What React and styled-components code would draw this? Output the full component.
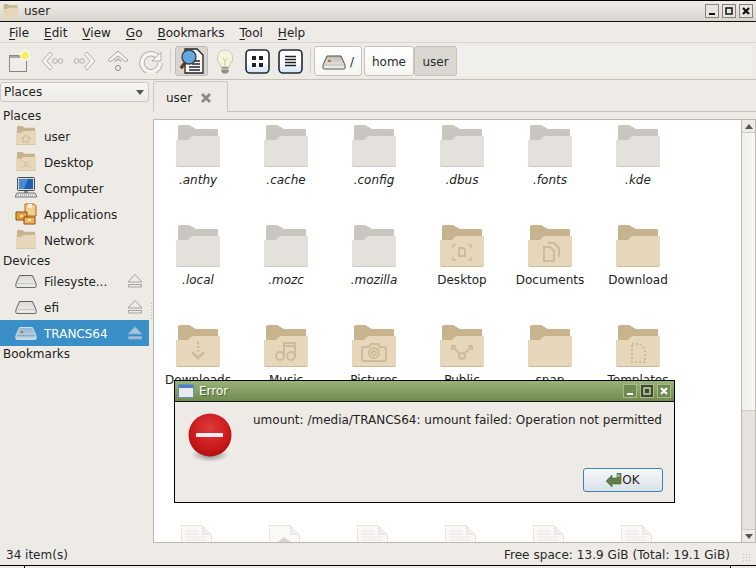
import React from 'react';
import styled, { createGlobalStyle } from 'styled-components';

const GlobalStyle = createGlobalStyle`
  html, body {
    margin: 0;
    padding: 0;
    background: #eeebe7;
  }
  * {
    box-sizing: border-box;
  }
`;

const Win = styled.div`
  position: relative;
  width: 756px;
  height: 568px;
  display: flex;
  flex-direction: column;
  overflow: hidden;
  background: #eeebe7;
  color: #1f2223;
  font-family: "DejaVu Sans", sans-serif;
  font-size: 12px;
  border-top: 1px solid #000;
`;

const TitleBar = styled.div`
  height: 21px;
  flex: none;
  display: flex;
  align-items: center;
  padding: 0 3px;
  background: linear-gradient(#f0ede9, #d8d3cd);
  border-bottom: 1px solid #111;
`;

const TitleText = styled.span`
  margin-left: 6px;
  flex: 1;
  color: #2a2a2a;
`;

const WinButtons = styled.div`
  display: flex;
  gap: 3px;
`;

const WinButton = styled.div`
  width: 14px;
  height: 14px;
  display: flex;
  align-items: center;
  justify-content: center;
  border: 1px solid ${({ $green }) => ($green ? '#a9bb8b' : '#8c8378')};
  background: ${({ $green, $dark }) => ($dark ? '#3f4a2c' : $green ? '#6f8a50' : '#e9e5e0')};
`;

const MenuBar = styled.div`
  height: 20px;
  flex: none;
  display: flex;
  align-items: center;
  padding: 2px 0 0 9px;
  gap: 15px;
`;

const MenuItem = styled.span`
  u {
    text-underline-offset: 2px;
  }
`;

const Toolbar = styled.div`
  height: 38px;
  flex: none;
  display: flex;
  align-items: center;
  padding: 0 4px 0 2px;
  border-top: 1px solid #d9d6d1;
  border-bottom: 1px solid #c4c1bb;
  background: #eeebe7;
`;

const ToolButton = styled.div`
  width: 33px;
  height: 30px;
  flex: none;
  display: flex;
  align-items: center;
  justify-content: center;
  border-radius: 3px;
  ${({ $active }) => $active && 'background: #d9d6d2; border: 1px solid #c0bdb8;'}
`;

const ToolSep = styled.div`
  width: 1px;
  height: 24px;
  flex: none;
  background: #d0cdc8;
  margin: ${({ $m }) => $m};
`;

const PathBar = styled.div`
  flex: 1;
  height: 30px;
  display: flex;
  background: #f1efeb;
`;

const PathButton = styled.div`
  width: ${({ $w }) => $w}px;
  margin-right: ${({ $mr }) => $mr || 0}px;
  display: flex;
  align-items: center;
  justify-content: center;
  gap: 4px;
  padding-top: 2px;
  border: 1px solid #c6c3bd;
  border-radius: 3px;
  background: ${({ $pressed }) => ($pressed ? '#dad7d3' : 'linear-gradient(#fff, #f6f5f3)')};
  color: #2a2d2e;
`;

const Main = styled.div`
  flex: 1;
  min-height: 0;
  display: flex;
`;

const Sidebar = styled.div`
  width: 149px;
  flex: none;
  display: flex;
  flex-direction: column;
  padding-top: 2px;
`;

const Combo = styled.div`
  height: 20px;
  flex: none;
  margin-bottom: 5px;
  display: flex;
  align-items: center;
  justify-content: space-between;
  padding: 0 4px 0 3px;
  border: 1px solid #cbc8c2;
  border-radius: 3px;
  background: linear-gradient(#f6f5f2, #ecebe7);
`;

const Caret = styled.span`
  width: 0;
  height: 0;
  border-left: 4px solid transparent;
  border-right: 4px solid transparent;
  border-${({ $up }) => ($up ? 'bottom' : 'top')}: 5px solid #555;
`;

const SideHeader = styled.div`
  height: ${({ $h }) => $h || 16}px;
  padding-left: 3px;
  line-height: ${({ $h }) => ($h || 16) + ($h === 17 ? 0 : 2)}px;
`;

const SideRow = styled.div`
  height: 26px;
  flex: none;
  display: flex;
  align-items: center;
  padding: 0 6px 0 15px;
  background: ${({ $sel }) => ($sel ? '#3a8fc7' : 'transparent')};
  color: ${({ $sel }) => ($sel ? '#fff' : 'inherit')};
`;

const SideIcon = styled.div`
  width: 22px;
  height: 22px;
  flex: none;
  display: flex;
  align-items: center;
  justify-content: center;
  margin-right: 7px;
`;

const SideLabel = styled.span`
  flex: 1;
  margin-top: 2px;
  white-space: nowrap;
`;

const Handle = styled.div`
  width: 4px;
  flex: none;
  display: flex;
  align-items: center;
  justify-content: center;
`;

const HandleDots = styled.div`
  width: 1px;
  height: 18px;
  background: repeating-linear-gradient(#bdb9b3 0 1px, transparent 1px 3px);
`;

const Notebook = styled.div`
  flex: 1;
  min-width: 0;
  display: flex;
  flex-direction: column;
`;

const TabStrip = styled.div`
  height: 31px;
  flex: none;
  display: flex;
  margin-top: 1px;
  border-bottom: 1px solid #c4c1bb;
  margin-bottom: 7px;
`;

const Tab = styled.div`
  width: 75px;
  height: 31px;
  display: flex;
  align-items: center;
  padding: 2px 0 0 12px;
  gap: 8px;
  border: 1px solid #cbc8c2;
  border-bottom: 1px solid #eeebe7;
  border-radius: 3px 3px 0 0;
`;

const ViewFrame = styled.div`
  flex: 1;
  min-height: 0;
  display: flex;
  border: 1px solid #bcb9b3;
  border-right: none;
`;

const FileArea = styled.div`
  flex: 1;
  overflow: hidden;
  background: #fff;
`;

const FileGrid = styled.div`
  display: grid;
  grid-template-columns: repeat(6, 88px);
  grid-auto-rows: 100px;
  padding-top: 5px;
`;

const FileCell = styled.div`
  display: flex;
  flex-direction: column;
  align-items: center;
`;

const RowGap = styled.div`
  grid-column: 1 / -1;
`;

const FileIcon = styled.div`
  height: 42px;
  display: flex;
  align-items: flex-start;
  padding-right: ${({ $doc }) => ($doc ? 3 : 0)}px;
`;

const FileName = styled.span`
  margin-top: 6px;
  line-height: 15px;
  font-style: ${({ $hidden }) => ($hidden ? 'italic' : 'normal')};
  color: #222;
`;

const ScrollBar = styled.div`
  width: 15px;
  flex: none;
  display: flex;
  flex-direction: column;
  border-left: 1px solid #bcb9b3;
  border-right: 1px solid #bcb9b3;
  background: linear-gradient(90deg, #f1efec, #f8f7f5);
`;

const ScrollEnd = styled.div`
  height: 13px;
  flex: none;
  display: flex;
  align-items: center;
  justify-content: center;
  background: #eeebe7;
  border-${({ $top }) => ($top ? 'bottom' : 'top')}: 1px solid #cdcac5;
`;

const ScrollTrack = styled.div`
  flex: 1;
`;

const ScrollThumb = styled.div`
  height: 119px;
  flex: none;
  background: #e6e3df;
  border-top: 1px solid #d2cfca;
`;

const StatusBar = styled.div`
  height: 22px;
  flex: none;
  display: flex;
  align-items: center;
  justify-content: space-between;
  padding: 2px 4px 0 6px;
  color: #26292a;
`;

const StatusRight = styled.div`
  display: flex;
  align-items: center;
  gap: 12px;
  letter-spacing: 0.05px;
`;

const Grip = styled.div`
  width: 10px;
  height: 10px;
  margin-top: 6px;
  background: radial-gradient(circle, #c4c1bb 0.6px, transparent 0.8px) 0 0 / 3px 3px;
`;

const BottomStrip = styled.div`
  height: 3px;
  flex: none;
  display: flex;
  background: #eeebe7;
  border-top: 1px solid #000;
`;

const StripCell = styled.div`
  width: ${({ $w }) => $w}px;
  border-right: 1px solid #000;
`;

const Dialog = styled.div`
  position: absolute;
  left: 174px;
  top: 379px;
  width: 501px;
  height: 123px;
  display: flex;
  flex-direction: column;
  border: 1px solid #000;
  background: #eeebe7;
`;

const DialogTitle = styled.div`
  height: 21px;
  flex: none;
  display: flex;
  align-items: center;
  padding: 0 3px;
  background: linear-gradient(#9ab277, #6e8b4e);
  border-bottom: 1px solid #111;
  color: #fff;
  text-shadow: 1px 1px 1px #4b5d36;
`;

const DialogTitleText = styled.span`
  flex: 1;
  margin-left: 5px;
`;

const DialogBody = styled.div`
  flex: 1;
  min-width: 0;
  display: flex;
  padding: 11px 11px 10px 13px;
`;

const DialogIcon = styled.div`
  width: 46px;
  flex: none;
  margin-right: 19px;
`;

const DialogMain = styled.div`
  flex: 1;
  min-width: 0;
  display: flex;
  flex-direction: column;
  justify-content: space-between;
  align-items: flex-end;
`;

const DialogText = styled.div`
  align-self: flex-start;
  line-height: 17px;
  margin-top: -1px;
  white-space: nowrap;
`;

const OkButton = styled.div`
  width: 80px;
  height: 24px;
  display: flex;
  align-items: center;
  justify-content: center;
  border: 1px solid #3d83b3;
  border-radius: 3px;
  background: linear-gradient(#f7f8f8, #d9e1e8);
`;

const FOLDERS = {
  gray: { back: '#c9c5c1', front: '#e4e0dc', edge: '#cbc7c2' },
  tan: { back: '#c7b38d', front: '#e6d6ba', edge: '#cdb994' },
};

const Emblem = ({ kind, c }) => {
  switch (kind) {
    case 'home':
      return <path d="M12 28l10-8 10 8M16 27v8h12v-8" fill="none" stroke={c} strokeWidth="2.400" />;
    case 'desktop':
      return (
        <g fill="none" stroke={c} strokeWidth="1.600">
          <path d="M13 23v-3h3M28 20h3v3M13 32v3h3M28 35h3v-3" />
          <path d="M19 23h4l2 2v6h-6z" strokeWidth="2" />
        </g>
      );
    case 'docs':
      return (
        <g fill="none" stroke={c} strokeWidth="2">
          <path d="M16 22h6l4 4v10H16z" />
          <path d="M20 18h6l5 5v9" />
        </g>
      );
    case 'down':
      return (
        <g fill={c}>
          <path d="M15 28l2-2 5 5 5-5 2 2-7 7z" />
          <rect x="21" y="17" width="2.200" height="2.200" />
          <rect x="21" y="21" width="2.200" height="2.200" />
          <rect x="21" y="25" width="2.200" height="2.200" />
        </g>
      );
    case 'music':
      return (
        <g fill="none" stroke={c} strokeWidth="2">
          <circle cx="16" cy="31" r="4" />
          <circle cx="27" cy="31" r="4" />
          <path d="M20 31V18h11v13M20 21h11" />
        </g>
      );
    case 'camera':
      return (
        <g fill="none" stroke={c} strokeWidth="2">
          <path d="M12 22h5l2-3h7l2 3h4q2 0 2 2v10q0 2-2 2H12q-2 0-2-2V24q0-2 2-2z" />
          <circle cx="22" cy="28" r="5" />
          <circle cx="22" cy="28" r="2" />
        </g>
      );
    case 'share':
      return (
        <g fill="none" stroke={c} strokeWidth="2">
          <circle cx="22" cy="31" r="3" />
          <path d="M19 28l-6-6M25 28l6-6M12 25v-4h4M32 25v-4h-4" />
        </g>
      );
    case 'template':
      return (
        <path d="M16 19h8l5 5v13H16z" fill="none" stroke={c} strokeWidth="2" strokeDasharray="2 2" />
      );
    default:
      return null;
  }
};

const Folder = ({ tone = 'tan', emblem, size = 44 }) => {
  const f = FOLDERS[tone];
  return (
    <svg width={size} height={(size * 42) / 44} viewBox="0 0 44 42">
      <path d="M2 2q0-2 2-2h9l7 4h21q1 0 1 1v11H2z" fill={f.back} />
      <path d="M0 15h12l4-4h28v29q0 2-2 2H2q-2 0-2-2z" fill={f.edge} />
      <path d="M0 15h12l4-4h28v28q0 2-2 2H2q-2 0-2-2z" fill={f.front} />
      <Emblem kind={emblem} c={tone === 'tan' ? '#cdbb9b' : '#cfcbc6'} />
    </svg>
  );
};

const FileDoc = ({ badge }) => (
  <svg width="31" height="32" viewBox="0 0 31 32">
    <path d="M.5 32V.5h21l9 9V32z" fill="#faf9f7" stroke="#e7e4df" />
    <path d="M21.500.5v9h9" fill="#f1efeb" stroke="#e7e4df" />
    {badge ? (
      <path d="M9 17l6-5 7 5z" fill="#d8d4ce" />
    ) : (
      <path d="M4 6h14M4 9h14M4 12h22M4 15h22M4 18h22M4 21h22" stroke="#e9e6e2" strokeWidth="1.200" />
    )}
  </svg>
);

const Drive = ({ sel, small, id = 'drv' }) => (
  <svg width="24" height="16" viewBox="0 0 24 16">
    <defs>
      <linearGradient id={id} x1="0" y1="0" x2="0" y2="1">
        <stop offset="0" stopColor={sel ? '#8fb6d0' : small ? '#bdbab5' : '#dad8d4'} />
        <stop offset="1" stopColor={sel ? '#c2d8e6' : '#f4f3f1'} />
      </linearGradient>
    </defs>
    <path
      d="M5 2h14l4 9v3q0 1-1 1H2q-1 0-1-1v-3z"
      fill={`url(#${id})`}
      stroke={sel ? '#d5e4ee' : '#55534f'}
    />
    <path d="M2 11h20" stroke={sel ? '#6d9dbd' : '#bdbab5'} />
    {small && <rect x="6" y="6" width="3" height="2" fill="#c56a3c" />}
  </svg>
);

const Eject = ({ sel }) => (
  <svg width="16" height="14" viewBox="0 0 16 14">
    <path d="M8 .5L15 8H1z" fill={sel ? '#a5c6dc' : '#eeece9'} stroke={sel ? '#7fa9c6' : '#a5a29d'} />
    <path d="M1.500 10.500h13v2.500h-13z" fill={sel ? '#a5c6dc' : '#eeece9'} stroke={sel ? '#7fa9c6' : '#a5a29d'} />
  </svg>
);

const Computer = () => (
  <svg width="22" height="22" viewBox="0 0 22 22">
    <rect x="2.500" y=".5" width="17" height="13" rx="1" fill="#d6d8d8" stroke="#4a4c4c" />
    <path d="M4 2h14v10H4z" fill="#1e5fb4" />
    <path d="M4 2h9l-4 10H4z" fill="#4b8ad3" />
    <path d="M9 14h4v2H9z" fill="#8a8c8c" />
    <path d="M2 16h18l2 4H0z" fill="#e8e8e6" stroke="#565856" strokeWidth=".8" />
    <path d="M3 18h16" stroke="#8e908e" strokeDasharray="1 1" />
  </svg>
);

const Applications = () => (
  <svg width="22" height="22" viewBox="0 0 22 22">
    <path d="M10 1h9l2 2v10H10z" fill="#f1cf8f" stroke="#a9681b" />
    <path d="M13 1h4v4h-4z" fill="#f8ecd2" />
    <path d="M1 9h11v8H1z" fill="#e8a03c" stroke="#8a4e10" />
    <path d="M9 14h11v7H9z" fill="#f0b55c" stroke="#8a4e10" />
    <path d="M5 12h3v2H5zM13 16h3v2h-3z" fill="#f7e3bb" />
  </svg>
);

const NewTab = () => (
  <svg width="26" height="26" viewBox="0 0 26 26">
    <rect x="3.500" y="7.500" width="17" height="16" fill="#efede9" stroke="#8a8781" />
    <path d="M4 8h16v2H4z" fill="#aaa7a1" />
    <path
      d="M18.500 1l1.700 3 3.300-.2-1 3.100 2 2.600-3.200.6-1.200 3-2.500-2.100-3.200.7.600-3.200-2.300-2.300 3.200-.5z"
      fill="#f6ee5a"
      stroke="#fff"
    />
  </svg>
);

const NavArrow = ({ flip }) => (
  <svg width="24" height="24" viewBox="0 0 24 24" style={flip ? { transform: 'scaleX(-1)' } : undefined}>
    <path d="M10 3l2.500 2.500-5.500 6.500 5.500 6.500-2.500 2.500-8-9z" fill="#f4f3f0" stroke="#b5b2ad" />
    <circle cx="15" cy="12" r="2.300" fill="none" stroke="#b5b2ad" />
    <circle cx="20.500" cy="12" r="2.300" fill="none" stroke="#b5b2ad" />
  </svg>
);

const UpArrow = () => (
  <svg width="22" height="24" viewBox="0 0 22 24">
    <path d="M11 2l10 9-2 2-8-6-8 6-2-2z" fill="#f4f3f0" stroke="#a9a6a1" />
    <path d="M11 9l4 3-1 1-3-2-3 2-1-1z" fill="#b8b5b0" />
    <circle cx="11" cy="19" r="2.500" fill="#eeece9" stroke="#8e8b86" />
  </svg>
);

const Reload = () => (
  <svg width="24" height="24" viewBox="0 0 24 24">
    <path d="M18.500 7.500a9 9 0 1 0 2.500 6.500" fill="none" stroke="#b3b0ab" strokeWidth="5.500" />
    <path d="M18.500 7.500a9 9 0 1 0 2.500 6.500" fill="none" stroke="#f5f4f1" strokeWidth="3.500" />
    <path d="M22 3v9h-9z" fill="#f5f4f1" stroke="#b3b0ab" />
  </svg>
);

const SearchDoc = () => (
  <svg width="26" height="27" viewBox="0 0 26 27">
    <path d="M6 1h12l6 6v18H6z" fill="#f5f5f3" stroke="#1e2225" strokeWidth="1.300" />
    <path d="M13 13h8M13 16h8M10 19h11M10 22h11" stroke="#24292c" strokeWidth="1.300" />
    <circle cx="10" cy="9" r="7" fill="#62a8e2" stroke="#3a3a38" strokeWidth="1.300" />
    <path d="M5 14l-4 5 2 2 4-5z" fill="#6a3c1e" stroke="#3a2a1e" strokeWidth=".6" />
  </svg>
);

const Bulb = () => (
  <svg width="18" height="25" viewBox="0 0 18 25">
    <path d="M9 1a8 8 0 0 0-5 14l1 3h8l1-3A8 8 0 0 0 9 1z" fill="#f8f6da" stroke="#c9c9bc" />
    <path d="M7 9l2 3 2-3M9 12v5" fill="none" stroke="#c8c6a8" />
    <path d="M5.500 18h7v5l-2 1.500h-3l-2-1.500z" fill="#8f8d88" />
    <path d="M5.500 20h7" stroke="#e2e0dc" />
  </svg>
);

const ViewButton = ({ list }) => (
  <svg width="25" height="25" viewBox="0 0 25 25">
    <defs>
      <linearGradient id={list ? 'vbl' : 'vbg'} x1="0" y1="0" x2="0" y2="1">
        <stop offset="0.5" stopColor="#fff" />
        <stop offset="1" stopColor="#cfe4f6" />
      </linearGradient>
    </defs>
    <rect x="1" y="1" width="23" height="23" rx="4" fill={`url(#${list ? 'vbl' : 'vbg'})`} stroke="#1f2a33" strokeWidth="1.600" />
    {list ? (
      <path d="M7 7.500h11M7 10.500h11M7 13.500h11M7 16.500h11" stroke="#222" strokeWidth="1.500" />
    ) : (
      <path d="M7 7h4v4H7zM14 7h4v4h-4zM7 14h4v4H7zM14 14h4v4h-4z" fill="#222" />
    )}
  </svg>
);

const CloseX = () => (
  <svg width="12" height="12" viewBox="0 0 12 12">
    <path d="M2 2l8 8M10 2l-8 8" stroke="#8d8a85" strokeWidth="2.800" />
  </svg>
);

const Glyph = ({ kind, color }) => (
  <svg width="10" height="10" viewBox="0 0 10 10">
    {kind === 'min' && <rect x="2" y="7" width="6" height="2" fill={color} />}
    {kind === 'max' && <rect x="2" y="2" width="6" height="6" fill="none" stroke={color} strokeWidth="1.500" />}
    {kind === 'close' && <path d="M2 2l6 6M8 2l-6 6" stroke={color} strokeWidth="2.200" />}
  </svg>
);

const ErrorIcon = () => (
  <svg width="46" height="50" viewBox="0 0 46 50">
    <defs>
      <radialGradient id="errRed" cx="0.5" cy="0.35" r="0.7">
        <stop offset="0" stopColor="#de3b3b" />
        <stop offset="0.7" stopColor="#c8161a" />
        <stop offset="1" stopColor="#a80d10" />
      </radialGradient>
      <radialGradient id="errShadow">
        <stop offset="0" stopColor="#8a8783" />
        <stop offset="1" stopColor="#eeebe7" />
      </radialGradient>
    </defs>
    <ellipse cx="22" cy="42" rx="19" ry="7" fill="url(#errShadow)" />
    <circle cx="22" cy="22" r="21.500" fill="url(#errRed)" />
    <rect x="8" y="20" width="27" height="4" fill="#f6eeee" />
  </svg>
);

const OkArrow = () => (
  <svg width="16" height="15" viewBox="0 0 16 15">
    <path d="M15 0h-4v5H6V2L0 8l6 6v-3h9z" fill="#5f7f4e" stroke="#4a6a3c" strokeWidth=".6" />
    <path d="M11 1h3v3h-3z" fill="#93ad82" />
  </svg>
);

const HIDDEN = ['.anthy', '.cache', '.config', '.dbus', '.fonts', '.kde', '.local', '.mozc', '.mozilla'];

const VISIBLE = [
  { name: 'Desktop', emblem: 'desktop' },
  { name: 'Documents', emblem: 'docs' },
  { name: 'Download' },
  { name: 'Downloads', emblem: 'down' },
  { name: 'Music', emblem: 'music' },
  { name: 'Pictures', emblem: 'camera' },
  { name: 'Public', emblem: 'share' },
  { name: 'snap' },
  { name: 'Templates', emblem: 'template' },
];

const MENUS = ['File', 'Edit', 'View', 'Go', 'Bookmarks', 'Tool', 'Help'];

const DOC_ROW = [false, true, false, false, false, false];

const App = () => (
  <Win>
    <GlobalStyle />
    <TitleBar>
      <Folder size={15} />
      <TitleText>user</TitleText>
      <WinButtons>
        <WinButton><Glyph kind="min" color="#111" /></WinButton>
        <WinButton><Glyph kind="max" color="#111" /></WinButton>
        <WinButton><Glyph kind="close" color="#111" /></WinButton>
      </WinButtons>
    </TitleBar>

    <MenuBar>
      {MENUS.map((m) => (
        <MenuItem key={m}>
          <u>{m[0]}</u>
          {m.slice(1)}
        </MenuItem>
      ))}
    </MenuBar>

    <Toolbar>
      <ToolButton><NewTab /></ToolButton>
      <ToolButton><NavArrow /></ToolButton>
      <ToolButton><NavArrow flip /></ToolButton>
      <ToolButton><UpArrow /></ToolButton>
      <ToolButton><Reload /></ToolButton>
      <ToolSep $m="0 4px 0 3px" />
      <ToolButton $active><SearchDoc /></ToolButton>
      <ToolButton><Bulb /></ToolButton>
      <ToolButton><ViewButton /></ToolButton>
      <ToolButton><ViewButton list /></ToolButton>
      <ToolSep $m="0 3px 0 3px" />
      <PathBar>
        <PathButton $w={48} $mr={2}>
          <Drive small id="drvPath" />
          /
        </PathButton>
        <PathButton $w={50}>home</PathButton>
        <PathButton $w={43} $pressed>user</PathButton>
      </PathBar>
    </Toolbar>

    <Main>
      <Sidebar>
        <Combo>
          Places
          <Caret />
        </Combo>
        <SideHeader>Places</SideHeader>
        <SideRow><SideIcon><Folder size={20} emblem="home" /></SideIcon><SideLabel>user</SideLabel></SideRow>
        <SideRow><SideIcon><Folder size={20} emblem="desktop" /></SideIcon><SideLabel>Desktop</SideLabel></SideRow>
        <SideRow><SideIcon><Computer /></SideIcon><SideLabel>Computer</SideLabel></SideRow>
        <SideRow><SideIcon><Applications /></SideIcon><SideLabel>Applications</SideLabel></SideRow>
        <SideRow><SideIcon><Folder size={20} /></SideIcon><SideLabel>Network</SideLabel></SideRow>
        <SideHeader $h={15}>Devices</SideHeader>
        <SideRow><SideIcon><Drive id="drvRoot" /></SideIcon><SideLabel>Filesyste...</SideLabel><Eject /></SideRow>
        <SideRow><SideIcon><Drive id="drvEfi" /></SideIcon><SideLabel>efi</SideLabel><Eject /></SideRow>
        <SideRow $sel><SideIcon><Drive sel small id="drvSel" /></SideIcon><SideLabel>TRANCS64</SideLabel><Eject sel /></SideRow>
        <SideHeader $h={17}>Bookmarks</SideHeader>
      </Sidebar>

      <Handle><HandleDots /></Handle>

      <Notebook>
        <TabStrip>
          <Tab>
            user
            <CloseX />
          </Tab>
        </TabStrip>
        <ViewFrame>
          <FileArea>
            <FileGrid>
              {HIDDEN.map((name) => (
                <FileCell key={name}>
                  <FileIcon><Folder tone="gray" /></FileIcon>
                  <FileName $hidden>{name}</FileName>
                </FileCell>
              ))}
              {VISIBLE.map((item) => (
                <FileCell key={item.name}>
                  <FileIcon><Folder emblem={item.emblem} /></FileIcon>
                  <FileName>{item.name}</FileName>
                </FileCell>
              ))}
              <RowGap />
              {DOC_ROW.map((badge, i) => (
                <FileCell key={i}>
                  <FileIcon $doc><FileDoc badge={badge} /></FileIcon>
                </FileCell>
              ))}
            </FileGrid>
          </FileArea>
          <ScrollBar>
            <ScrollEnd $top><Caret $up /></ScrollEnd>
            <ScrollTrack />
            <ScrollThumb />
            <ScrollEnd><Caret /></ScrollEnd>
          </ScrollBar>
        </ViewFrame>
      </Notebook>
    </Main>

    <StatusBar>
      <span>34 item(s)</span>
      <StatusRight>
        <span>Free space: 13.9 GiB (Total: 19.1 GiB)</span>
        <Grip />
      </StatusRight>
    </StatusBar>
    <BottomStrip>
      <StripCell $w={25} />
      <StripCell $w={706} />
    </BottomStrip>

    <Dialog>
      <DialogTitle>
        <svg width="16" height="14" viewBox="0 0 16 14">
          <rect x=".5" y=".5" width="15" height="13" fill="#e8ebee" stroke="#6f8fb5" />
          <rect x="1" y="1" width="14" height="3" fill="#4f7fbf" />
        </svg>
        <DialogTitleText>Error</DialogTitleText>
        <WinButtons>
          <WinButton $green><Glyph kind="min" color="#fff" /></WinButton>
          <WinButton $green $dark><Glyph kind="max" color="#c8d2b4" /></WinButton>
          <WinButton $green><Glyph kind="close" color="#fff" /></WinButton>
        </WinButtons>
      </DialogTitle>
      <DialogBody>
        <DialogIcon><ErrorIcon /></DialogIcon>
        <DialogMain>
          <DialogText>umount: /media/TRANCS64: umount failed: Operation not permitted</DialogText>
          <OkButton>
            <OkArrow />
            OK
          </OkButton>
        </DialogMain>
      </DialogBody>
    </Dialog>
  </Win>
);

export default App;
